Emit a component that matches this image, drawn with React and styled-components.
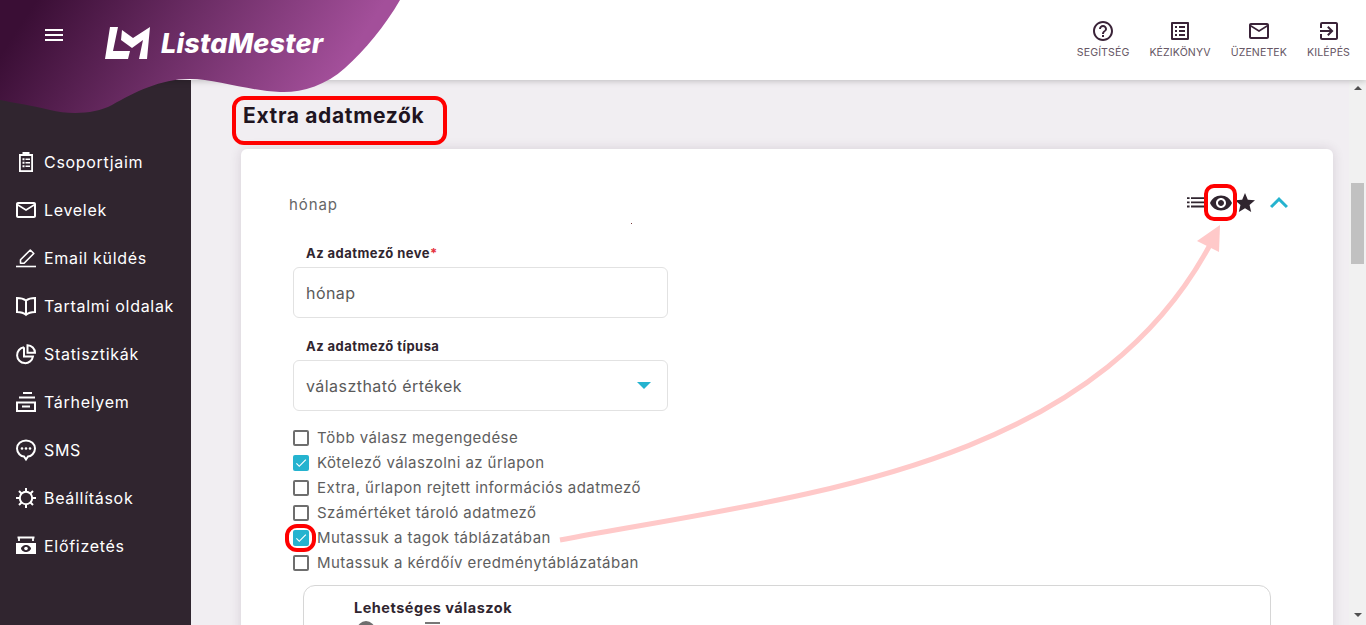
import React from 'react';
import styled, { createGlobalStyle } from 'styled-components';
import { MdMenu, MdMailOutline, MdHelpOutline, MdOutlineListAlt, MdOutlineExitToApp, MdVisibility, MdStar, MdExpandLess, MdCheck } from 'react-icons/md';

const Global = createGlobalStyle`
  html, body { margin: 0; padding: 0; height: 100%; overflow: hidden; }
  body { font-family: Inter, "Noto Sans", sans-serif; color: #30252f; }
  * { box-sizing: border-box; }
`;

const Page = styled.div`
  position: relative;
  display: grid;
  grid-template-rows: 80px 1fr;
  height: 625px;
  width: 1366px;
  overflow: hidden;
  background: #f1eef2;
`;

const Header = styled.header`
  position: relative;
  z-index: 2;
  display: flex;
  justify-content: space-between;
  background: #fff;
  box-shadow: 0 1px 6px rgba(0, 0, 0, 0.22);
`;

const Blob = styled.svg`
  position: absolute;
  left: 0;
  top: 0;
`;

const Brand = styled.div`
  position: relative;
  display: flex;
  align-items: flex-start;
  padding: 23px 0 0 42px;
  color: #fff;
`;

const LogoMark = styled.svg`
  margin: 4px 0 0 39px;
  flex: none;
`;

const LogoText = styled.span`
  margin: 5px 0 0 10px;
  font-size: 27px;
  line-height: 32px;
  font-weight: 800;
  font-style: italic;
  letter-spacing: 0.2px;
`;

const Tools = styled.nav`
  display: flex;
  gap: 20px;
  padding: 19px 16px 0 0;
`;

const Tool = styled.div`
  display: flex;
  flex-direction: column;
  align-items: center;
  color: #3a2338;
  gap: 2px;
`;

const ToolLabel = styled.span`
  font-size: 10.6px;
  line-height: 16px;
  letter-spacing: 0.1px;
  color: #665664;
`;

const Body = styled.div`
  display: grid;
  grid-template-columns: 191px 1fr;
  min-height: 0;
`;

const Sidebar = styled.aside`
  background: #30252f;
  padding-top: 58px;
  color: #fff;
`;

const NavItem = styled.div`
  display: flex;
  align-items: center;
  gap: 6px;
  height: 48px;
  padding-left: 14px;
  font-size: 16px;
  font-weight: 400;
  letter-spacing: 0.7px;
`;

const Main = styled.main`
  display: flex;
  min-width: 0;
  min-height: 0;
`;

const Content = styled.div`
  flex: 1;
  min-width: 0;
  overflow: hidden;
  padding: 21px 16px 0 50px;
`;

const Title = styled.h1`
  margin: 0 0 18px 2px;
  font-size: 21px;
  line-height: 30px;
  font-weight: 700;
  letter-spacing: 0.65px;
  color: #20141f;
`;

const Card = styled.section`
  background: #fff;
  border-radius: 6px;
  box-shadow: 0 0 12px rgba(60, 30, 60, 0.14);
  padding: 36px 36px 0 48px;
  height: 600px;
`;

const RowHead = styled.div`
  display: flex;
  align-items: center;
  justify-content: space-between;
  height: 36px;
  font-size: 15px;
  color: #666;
  letter-spacing: 0.9px;
`;

const RowName = styled.span`
  padding-top: 2px;
`;

const HeadIcons = styled.div`
  display: flex;
  align-items: center;
  color: #30252f;
`;

const Chevron = styled.span`
  display: flex;
  margin-left: 4px;
  color: #25b3cf;
`;

const Form = styled.div`
  padding: 22px 0 0 4px;
`;

const Field = styled.div`
  width: 375px;
  & + & {
    margin-top: 18px;
  }
`;

const Label = styled.div`
  padding-left: 13px;
  font-size: 13px;
  line-height: 20px;
  font-weight: 700;
  letter-spacing: 0.45px;
  color: #30252f;
  margin-bottom: 4px;
`;

const Req = styled.span`
  color: #e5333f;
`;

const InputBox = styled.div`
  display: flex;
  align-items: center;
  justify-content: space-between;
  height: 51px;
  padding: 0 16px 0 12px;
  border: 1px solid #e2e2e2;
  border-radius: 6px;
  font-size: 16px;
  letter-spacing: 0.45px;
  color: #5a5a5a;
`;

const Caret = styled.span`
  width: 0;
  height: 0;
  border-left: 7px solid transparent;
  border-right: 7px solid transparent;
  border-top: 7px solid #25b3cf;
`;

const Checks = styled.div`
  margin-top: 14px;
  display: flex;
  flex-direction: column;
`;

const CheckRow = styled.div`
  display: flex;
  align-items: center;
  gap: 8px;
  height: 25px;
  font-size: 15px;
  letter-spacing: 0.44px;
  color: #5e5e5e;
`;

const Box = styled.span`
  display: flex;
  align-items: center;
  justify-content: center;
  width: 16px;
  height: 16px;
  border-radius: 2px;
  color: #fff;
  border: ${p => (p.$on ? '0' : '2px solid #6e6e6e')};
  background: ${p => (p.$on ? '#25b3cf' : '#fff')};
`;

const OptionsBox = styled.div`
  margin: 10px 26px 0 10px;
  height: 200px;
  padding: 12px 0 0 50px;
  border: 1px solid #d6d6d6;
  border-radius: 12px;
`;

const OptionsTitle = styled.div`
  font-size: 14.5px;
  line-height: 20px;
  font-weight: 700;
  letter-spacing: 0.5px;
  color: #30252f;
`;

const OptionRow = styled.div`
  display: flex;
  align-items: flex-start;
  margin: 3px 0 0 3px;
  gap: 50px;
`;

const Radio = styled.span`
  width: 18px;
  height: 18px;
  border-radius: 50%;
  background: #6e6e6e;
`;

const OptionMark = styled.span`
  width: 15px;
  height: 2px;
  margin-top: 1px;
  background: #777;
`;

const Scrollbar = styled.div`
  display: flex;
  flex-direction: column;
  align-items: center;
  width: 17px;
  background: #f1f1f1;
`;

const ScrollArrow = styled.span`
  width: 0;
  height: 0;
  border-left: 4px solid transparent;
  border-right: 4px solid transparent;
  ${p => (p.$down ? 'border-top: 4px solid #505050; margin-top: auto; margin-bottom: 8px;' : 'border-bottom: 4px solid #505050; margin-top: 6px;')}
`;

const Thumb = styled.span`
  width: 13px;
  height: 81px;
  margin-top: 93px;
  background: #c1c1c1;
`;

const Overlay = styled.svg`
  position: absolute;
  inset: 0;
  z-index: 3;
  pointer-events: none;
`;

const Highlight = styled.span`
  position: absolute;
  z-index: 4;
  left: ${p => p.$x}px;
  top: ${p => p.$y}px;
  width: ${p => p.$w}px;
  height: ${p => p.$h}px;
  border: 4px solid #f00;
  border-radius: ${p => p.$r}px;
  pointer-events: none;
`;

const Speck = styled.span`
  position: absolute;
  left: 631px;
  top: 223px;
  width: 1px;
  height: 1px;
  background: #7a3a3a;
`;

const I = ({ children, size = 24 }) => (
  <svg width={size} height={size} viewBox="0 0 24 24" fill="none" stroke="currentColor" strokeWidth="2" style={{ flex: 'none' }}>{children}</svg>
);

const D = '#30252f';

const IconClip = () => (
  <I>
    <path stroke="none" fill="currentColor" d="M5 4h3.500V2h7v2H19v18H5z" />
    <path stroke="none" fill={D} d="M6.800 6h10.400v14.200H6.800z" />
    <path stroke="none" fill="currentColor" d="M8.500 8.200h2v2h-2zM11.500 8.500h4.500v1.500h-4.500zM8.500 11.700h2v2h-2zM11.500 12h4.500v1.500h-4.500zM8.500 15.200h2v2h-2zM11.500 15.500h4.500V17h-4.500z" />
  </I>
);
const IconPen = () => (
  <I>
    <path d="M6.500 17.300v-3.600L16.300 4l3.500 3.500-9.700 9.800z" strokeWidth="1.600" strokeLinejoin="round" />
    <path d="M2 20.500h20" strokeWidth="1.600" />
  </I>
);
const IconBook = () => (
  <I><path d="M12 6.500C10 5 6 4 3 4v14c3 0 7 1 9 2.800 2-1.800 6-2.800 9-2.800V4c-3 0-7 1-9 2.500zM12 6.500v14" /></I>
);
const IconPie = () => (
  <I>
    <path d="M10 5.200a8 8 0 1 0 9 9.200h-4" />
    <path d="M13.500 3.200a7.600 7.600 0 0 1 7.500 7.600h-7.500z" />
    <path d="M10 5.200v9.200h5" />
  </I>
);
const IconTray = () => (
  <I>
    <path d="M9 3h9M5 7.500h16M3 12.500h18V21H3zM8 16.500h8" />
  </I>
);
const IconChat = () => (
  <I>
    <path d="M12 2.500c5 0 9 3.500 9 8s-4 8-7 8l-2 3-2-3c-3 0-7-3.500-7-8s4-8 9-8z" />
    <circle cx="8" cy="10.500" r="1.300" fill="currentColor" stroke="none" />
    <circle cx="12" cy="10.500" r="1.300" fill="currentColor" stroke="none" />
    <circle cx="16" cy="10.500" r="1.300" fill="currentColor" stroke="none" />
  </I>
);
const IconGear = () => (
  <I>
    <circle cx="12" cy="12" r="6.200" />
    <path d="M12 2v3.500M12 18.500V22M2 12h3.500M18.500 12H22M5 5l2.500 2.500M16.500 16.500L19 19M19 5l-2.500 2.500M7.500 16.500L5 19" />
  </I>
);
const IconCash = () => (
  <I>
    <path stroke="none" fill="currentColor" fillRule="evenodd" d="M2 9h20v11H2zM12 11c-3 0-5 2.500-5 3.500S9 18 12 18s5-2.500 5-3.500S15 11 12 11z" />
    <circle cx="12" cy="14.500" r="1.800" fill="currentColor" stroke="none" />
    <path d="M3.500 3.500h17M5 3.500V7M19 3.500V7" strokeWidth="1.800" />
  </I>
);
const IconRows = () => (
  <svg width="22" height="24" viewBox="0 0 22 24" fill="currentColor" style={{ flex: 'none' }}>
    <path d="M0 6.200h2.600v1.800H0zM4 6.200h13v1.800H4zM0 10.400h2.600v1.800H0zM4 10.400h13v1.800H4zM0 14.600h2.600v1.800H0zM4 14.600h13v1.800H4z" />
  </svg>
);

const navItems = [
  ['Csoportjaim', <IconClip />],
  ['Levelek', <MdMailOutline size={24} />],
  ['Email küldés', <IconPen />],
  ['Tartalmi oldalak', <IconBook />],
  ['Statisztikák', <IconPie />],
  ['Tárhelyem', <IconTray />],
  ['SMS', <IconChat />],
  ['Beállítások', <IconGear />],
  ['Előfizetés', <IconCash />],
];

const tools = [
  ['SEGÍTSÉG', <MdHelpOutline size={24} />],
  ['KÉZIKÖNYV', <MdOutlineListAlt size={24} />],
  ['ÜZENETEK', <MdMailOutline size={24} />],
  ['KILÉPÉS', <MdOutlineExitToApp size={24} />],
];

const checks = [
  ['Több válasz megengedése', false],
  ['Kötelező válaszolni az űrlapon', true],
  ['Extra, űrlapon rejtett információs adatmező', false],
  ['Számértéket tároló adatmező', false],
  ['Mutassuk a tagok táblázatában', true],
  ['Mutassuk a kérdőív eredménytáblázatában', false],
];

export default function App() {
  return (
    <Page>
      <Global />
      <Header>
        <Blob width="400" height="116" viewBox="0 0 400 116">
          <defs>
            <linearGradient id="g" gradientUnits="userSpaceOnUse" x1="30" y1="10" x2="275" y2="170">
              <stop offset="0" stopColor="#3a0e35" />
              <stop offset="1" stopColor="#a34f9a" />
            </linearGradient>
          </defs>
          <path fill="url(#g)" d="M0 0H400C385 26 365 50 345 68C325 86 300 93 280 92C250 91 215 79 190 79C160 79 135 92 112 105C95 114 70 115 50 110C30 105 15 103 0 100Z" />
        </Blob>
        <Brand>
          <MdMenu size={24} />
          <LogoMark width="46" height="33" viewBox="0 0 46 33">
            <path fill="#fff" d="M5 0h8L8 24h17l-2 8H0z" />
            <path fill="#fff" d="M17 3l11 8L45 0l-3 32h-8l4-19-11 8-11-8z" />
          </LogoMark>
          <LogoText>ListaMester</LogoText>
        </Brand>
        <Tools>
          {tools.map(([t, ic]) => (
            <Tool key={t}>{ic}<ToolLabel>{t}</ToolLabel></Tool>
          ))}
        </Tools>
      </Header>
      <Body>
        <Sidebar>
          {navItems.map(([t, ic]) => (
            <NavItem key={t}>{ic}<span>{t}</span></NavItem>
          ))}
        </Sidebar>
        <Main>
          <Content>
            <Title>Extra adatmezők</Title>
            <Card>
              <RowHead>
                <RowName>hónap</RowName>
                <HeadIcons>
                  <IconRows />
                  <MdVisibility size={24} />
                  <MdStar size={24} />
                  <Chevron><MdExpandLess size={36} /></Chevron>
                </HeadIcons>
              </RowHead>
              <Form>
                <Field>
                  <Label>Az adatmező neve<Req>*</Req></Label>
                  <InputBox>hónap</InputBox>
                </Field>
                <Field>
                  <Label>Az adatmező típusa</Label>
                  <InputBox>választható értékek<Caret /></InputBox>
                </Field>
                <Checks>
                  {checks.map(([t, on]) => (
                    <CheckRow key={t}>
                      <Box $on={on}>{on && <MdCheck size={14} />}</Box>
                      <span>{t}</span>
                    </CheckRow>
                  ))}
                </Checks>
                <OptionsBox>
                  <OptionsTitle>Lehetséges válaszok</OptionsTitle>
                  <OptionRow>
                    <Radio />
                    <OptionMark />
                  </OptionRow>
                </OptionsBox>
              </Form>
            </Card>
          </Content>
          <Scrollbar>
            <ScrollArrow />
            <Thumb />
            <ScrollArrow $down />
          </Scrollbar>
        </Main>
      </Body>
      <Overlay width="1366" height="625" viewBox="0 0 1366 625">
        <path d="M560 540C800 495 1090 470 1211 243" fill="none" stroke="#ffc9c9" strokeWidth="5" />
        <path d="M1220 225L1197 241L1219 252Z" fill="#ffc9c9" />
      </Overlay>
      <Speck />
      <Highlight $x={232} $y={96} $w={215} $h={49} $r={12} />
      <Highlight $x={1204} $y={184} $w={33} $h={37} $r={10} />
      <Highlight $x={285} $y={524} $w={31} $h={28} $r={12} />
    </Page>
  );
}
